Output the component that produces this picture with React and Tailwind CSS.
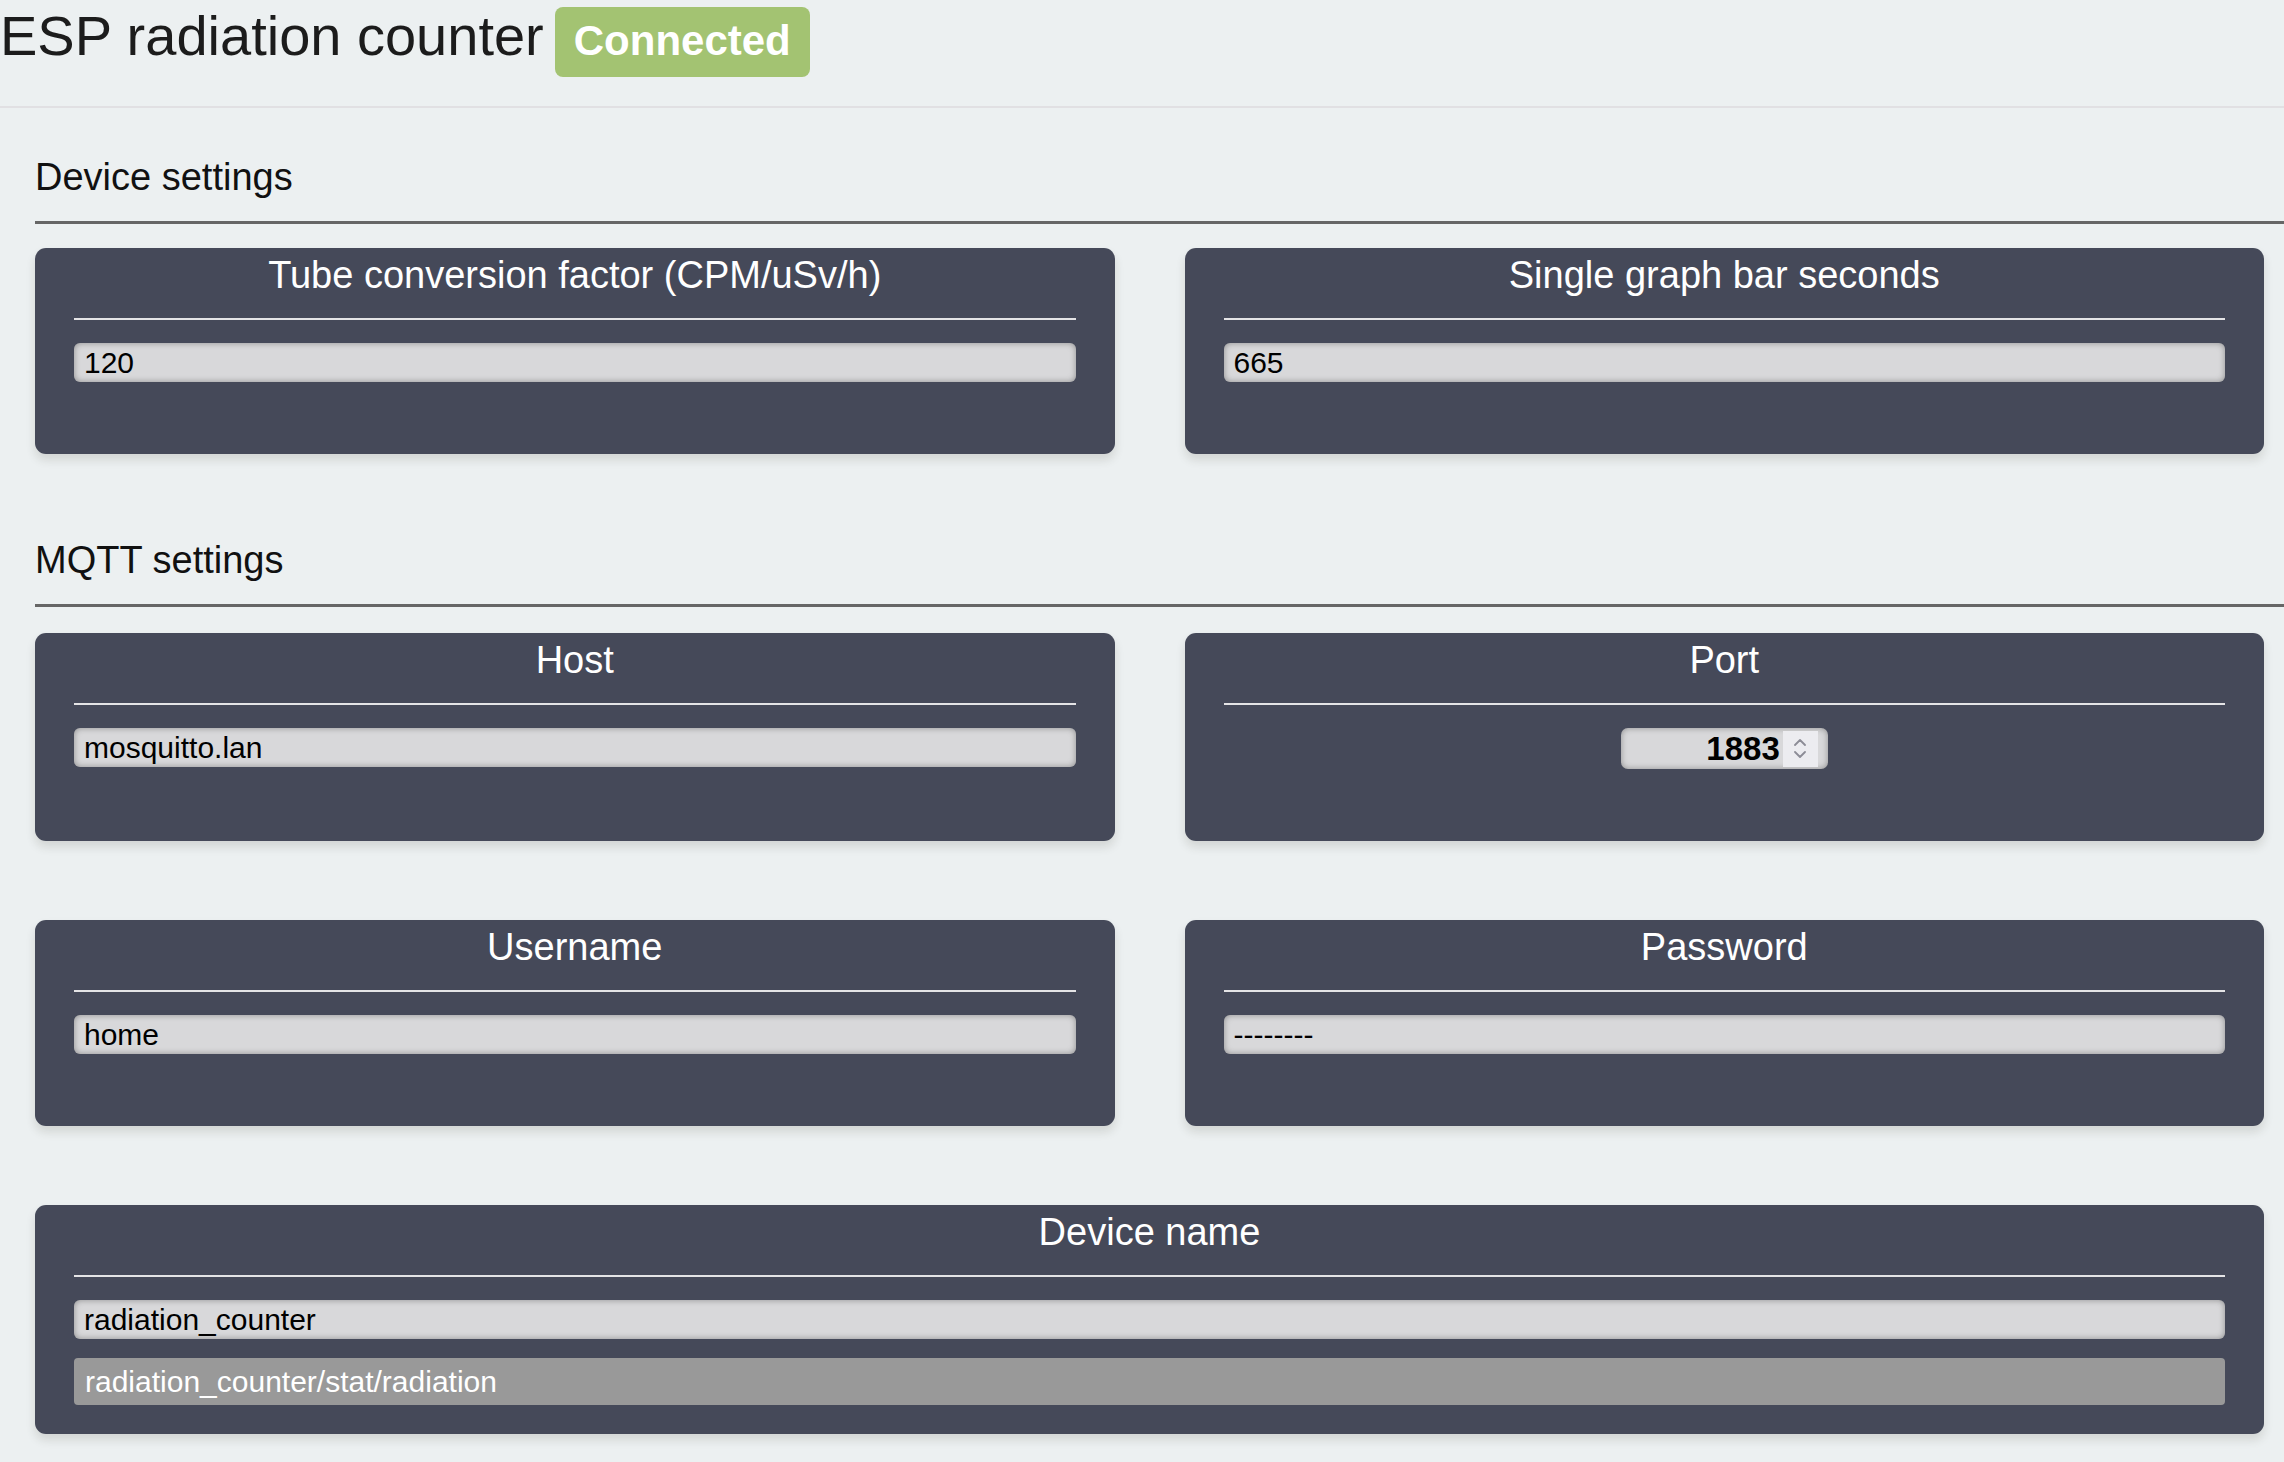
import React from 'react';

const font = { fontFamily: '"Liberation Sans", Arial, sans-serif' };

const SectionTitle = ({ children }) => (
    <div className="ml-[35px] border-b-[3px] border-[#666666] pb-[25px]">
        <h2 className="text-[38px] leading-none text-[#111111]">{children}</h2>
    </div>
);

const Card = ({ title, children, bottom = 'pb-[72px]' }) => (
    <div className={`bg-[#454959] rounded-[11px] px-[39px] pt-[8px] ${bottom} shadow-[0_6px_10px_rgba(60,55,40,0.14)]`}>
        <h3 className="text-[38px] leading-none text-white text-center">{title}</h3>
        <div className="mt-[24px] h-[2px] bg-[#e4e4e6]" />
        <div className="mt-[23px] flex flex-col gap-[19px]">{children}</div>
    </div>
);

const TextField = ({ value }) => (
    <div className="h-[39px] rounded-[6px] bg-[#d8d8da] shadow-[inset_0_0_6px_rgba(0,0,0,0.35)] pl-[10px] flex items-center text-[30px] leading-none text-black">
        {value}
    </div>
);

const ReadonlyField = ({ value }) => (
    <div className="h-[47px] rounded-[4px] bg-[#999999] pl-[11px] flex items-center text-[30px] leading-none text-white">
        {value}
    </div>
);

const PortField = ({ value }) => (
    <div className="flex justify-center">
        <div className="w-[207px] h-[41px] rounded-[7px] bg-[#d8d8da] shadow-[inset_0_0_6px_rgba(0,0,0,0.35)] flex items-center justify-end pr-[10px]">
            <span className="text-[33px] leading-none font-bold text-black">{value}</span>
            <div className="ml-[3px] w-[35px] h-[36px] bg-[#ececf0] flex flex-col items-center justify-center gap-[5px]">
                <svg width="12" height="7" viewBox="0 0 12 7">
                    <path d="M1 6 L6 1 L11 6" fill="none" stroke="#8c8c96" strokeWidth="1.8" strokeLinecap="round" strokeLinejoin="round" />
                </svg>
                <svg width="12" height="7" viewBox="0 0 12 7">
                    <path d="M1 1 L6 6 L11 1" fill="none" stroke="#8c8c96" strokeWidth="1.8" strokeLinecap="round" strokeLinejoin="round" />
                </svg>
            </div>
        </div>
    </div>
);

const App = () => {
    return (
        <div className="min-h-screen bg-[#ecf0f1] overflow-hidden" style={font}>
            {/* Header */}
            <div className="h-[108px] flex items-start border-b-2 border-[#e1e0e3]">
                <h1 className="mt-[8px] text-[56px] leading-none text-[#1c1c1c] whitespace-nowrap">ESP radiation counter</h1>
                <div className="ml-[11px] mt-[7px] h-[70px] px-[19px] pt-[13px] rounded-[8px] bg-[#a3c372]">
                    <span className="block text-[42px] leading-none font-bold text-white">Connected</span>
                </div>
            </div>

            {/* Device settings */}
            <div className="mt-[50px]">
                <SectionTitle>Device settings</SectionTitle>
                <div className="mt-[24px] pl-[35px] pr-[20px] grid grid-cols-2 gap-x-[70px]">
                    <Card title="Tube conversion factor (CPM/uSv/h)">
                        <TextField value="120" />
                    </Card>
                    <Card title="Single graph bar seconds">
                        <TextField value="665" />
                    </Card>
                </div>
            </div>

            {/* MQTT settings */}
            <div className="mt-[87px]">
                <SectionTitle>MQTT settings</SectionTitle>
                <div className="mt-[26px] pl-[35px] pr-[20px] grid grid-cols-2 gap-x-[70px] gap-y-[79px]">
                    <Card title="Host">
                        <TextField value="mosquitto.lan" />
                    </Card>
                    <Card title="Port">
                        <PortField value="1883" />
                    </Card>
                    <Card title="Username">
                        <TextField value="home" />
                    </Card>
                    <Card title="Password">
                        <TextField value="--------" />
                    </Card>
                    <div className="col-span-2">
                        <Card title="Device name" bottom="pb-[29px]">
                            <TextField value="radiation_counter" />
                            <ReadonlyField value="radiation_counter/stat/radiation" />
                        </Card>
                    </div>
                </div>
            </div>
            <div className="h-[40px]" />
        </div>
    );
};

export default App;
